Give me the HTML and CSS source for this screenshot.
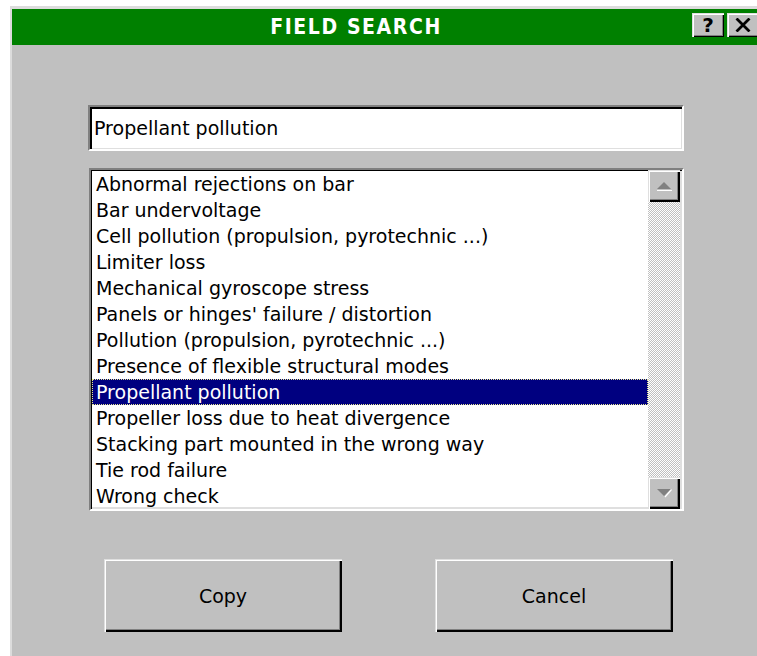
FILE: index.html
```html
<!DOCTYPE html>
<html lang="en">
<head>
<meta charset="utf-8">
<title>Field Search</title>
<link rel="stylesheet" href="styles.css">
</head>
<body>
<div class="window">
  <div class="titlebar">
    <div class="title">FIELD SEARCH</div>
    <div class="caption-btns">
      <button class="cap-btn help">?</button>
      <button class="cap-btn close" aria-label="Close">
        <svg width="16" height="14" viewBox="0 0 16 14"><path d="M1.5 0.5 L14.5 13.5 M14.5 0.5 L1.5 13.5" stroke="#000" stroke-width="2.8" fill="none"/></svg>
      </button>
    </div>
  </div>
  <div class="content">
    <div class="field">Propellant pollution</div>
    <div class="listbox">
      <ul class="items">
        <li>Abnormal rejections on bar</li>
        <li>Bar undervoltage</li>
        <li>Cell pollution (propulsion, pyrotechnic ...)</li>
        <li>Limiter loss</li>
        <li>Mechanical gyroscope stress</li>
        <li>Panels or hinges' failure / distortion</li>
        <li>Pollution (propulsion, pyrotechnic ...)</li>
        <li>Presence of flexible structural modes</li>
        <li class="selected">Propellant pollution</li>
        <li>Propeller loss due to heat divergence</li>
        <li>Stacking part mounted in the wrong way</li>
        <li>Tie rod failure</li>
        <li>Wrong check</li>
      </ul>
      <div class="scrollbar">
        <div class="sb-btn">
          <svg width="18" height="10" viewBox="0 0 18 10"><path d="M9 1 L16 8 L2 8 Z" fill="#808080"/><path d="M2 9.5 H17" stroke="#fff" stroke-width="1"/></svg>
        </div>
        <div class="track"></div>
        <div class="sb-btn">
          <svg width="18" height="10" viewBox="0 0 18 10"><path d="M2 1 L16 1 L9 8 Z" fill="#808080"/><path d="M16.5 1.5 L10 9" stroke="#fff" stroke-width="1.2"/></svg>
        </div>
      </div>
    </div>
    <div class="actions">
      <button class="btn">Copy</button>
      <button class="btn">Cancel</button>
    </div>
  </div>
</div>
</body>
</html>
```

FILE: styles.css
```css
html, body {
  margin: 0;
  height: 100%;
  overflow: hidden;
  background: #fff;
}

body {
  font-family: "DejaVu Sans", sans-serif;
  font-size: 19px;
  color: #000;
}

.window {
  margin: 6px 0 0 10px;
  width: 751px;
  height: 660px;
  box-sizing: border-box;
  background: #c0c0c0;
  border-top: 3px solid #dcdcdc;
  border-left: 2px solid #dcdcdc;
}

/* caption */
.titlebar {
  height: 36px;
  background: #008000;
  display: flex;
  align-items: flex-start;
  padding-right: 2px;
}

.title {
  flex: 1;
  align-self: center;
  text-align: center;
  padding-left: 8px;
  color: #fff;
  font-family: "DejaVu Sans", sans-serif;
  font-stretch: condensed;
  font-weight: bold;
  font-size: 21px;
  letter-spacing: 1.6px;
  line-height: 22px;
}

.caption-btns {
  display: flex;
  gap: 3px;
  padding-top: 4px;
}

.cap-btn {
  width: 32px;
  height: 24px;
  padding: 0;
  border: 0;
  background: #c0c0c0;
  box-shadow: inset 1px 1px #dfdfdf, inset 2px 2px #fff, inset -1px -1px #000, inset -2px -2px #808080;
  display: flex;
  align-items: center;
  justify-content: center;
  font-family: "DejaVu Sans", sans-serif;
  font-weight: bold;
  font-size: 20px;
  line-height: 1;
  color: #000;
}

/* dialog body */
.content {
  padding: 60px 0 0 76px;
}

.field {
  width: 596px;
  height: 46px;
  box-sizing: border-box;
  background: #fff;
  border: 2px solid;
  border-color: #808080 #fff #fff #808080;
  box-shadow: inset 2px 2px #000, inset -1px -1px #dfdfdf;
  padding-left: 4px;
  display: flex;
  align-items: center;
}

.listbox {
  margin: 17px 0 0 1px;
  width: 595px;
  height: 343px;
  box-sizing: border-box;
  background: #fff;
  border: 2px solid;
  border-color: #808080 #fff #fff #808080;
  box-shadow: inset 1px 1px #000, inset -2px -2px #dfdfdf;
  padding: 0 2px 0 1px;
  display: flex;
}

.items {
  list-style: none;
  margin: 0;
  padding: 1px 0 0;
  flex: 1;
  overflow: hidden;
}

.items li {
  height: 26px;
  line-height: 26px;
  padding-left: 4px;
  white-space: nowrap;
}

.items li.selected {
  background: #000080;
  color: #fff;
  outline: 1px dotted #e8e890;
  outline-offset: -1px;
}

/* vertical scroll bar */
.scrollbar {
  width: 32px;
  display: flex;
  flex-direction: column;
}

.sb-btn {
  height: 32px;
  flex: none;
  background: #c0c0c0;
  box-shadow: inset 1px 1px #dfdfdf, inset 2px 2px #fff, inset -1px -1px #000, inset -2px -2px #000, inset -3px -3px #808080;
  display: flex;
  align-items: center;
  justify-content: center;
}

.track {
  flex: 1;
  background: repeating-conic-gradient(#c0c0c0 0 25%, #fff 0 50%) 0 0 / 2px 2px;
}

/* command buttons */
.actions {
  display: flex;
  gap: 93px;
  margin: 48px 0 0 16px;
}

.btn {
  width: 238px;
  height: 73px;
  padding: 0;
  border: 0;
  background: #c0c0c0;
  box-shadow: inset 1px 1px #dfdfdf, inset 2px 2px #fff, inset -1px -1px #000, inset -2px -2px #000, inset -3px -3px #808080;
  font-family: "DejaVu Sans", sans-serif;
  font-size: 19px;
  color: #000;
}
```
